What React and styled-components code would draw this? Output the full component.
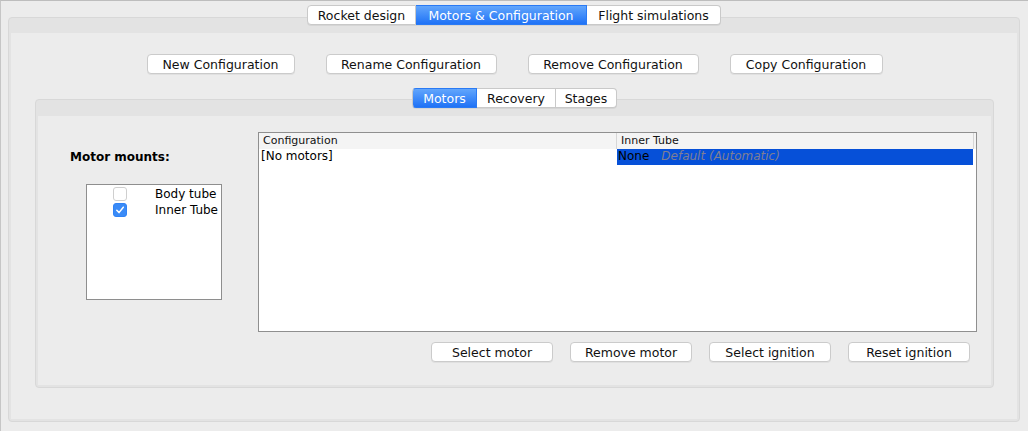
import React from "react";
import styled, { createGlobalStyle, css } from "styled-components";

const GlobalStyle = createGlobalStyle`
  html, body {
    margin: 0;
    padding: 0;
    background: #ececec;
  }
  body {
    font-family: "DejaVu Sans", "Liberation Sans", sans-serif;
    font-size: 12px;
    color: #000;
  }
`;

const Window = styled.div`
  width: 1028px;
  height: 431px;
  box-sizing: border-box;
  border-top: 1px solid #bdbdbd;
  border-left: 1px solid #c6c6c6;
  padding: 4px 8px 9px 7px;
  display: flex;
  flex-direction: column;
  background: #ececec;
`;

const TabStrip = styled.div`
  display: flex;
  justify-content: center;
  position: relative;
  z-index: 2;
  height: 20px;
`;

const Tab = styled.div`
  width: ${(p) => p.$w}px;
  height: 20px;
  box-sizing: border-box;
  display: flex;
  align-items: center;
  justify-content: center;
  background: #fff;
  border: 1px solid #c9c9c9;
  border-left: none;
  box-shadow: 0 1px 0 rgba(0, 0, 0, 0.06);
  font-size: 12.5px;
  color: #111;
  white-space: nowrap;
  &:first-child {
    border-left: 1px solid #c9c9c9;
    border-radius: 4px 0 0 4px;
  }
  &:last-child {
    border-radius: 0 4px 4px 0;
  }
  ${(p) =>
    p.$active &&
    css`
      background: linear-gradient(#62a6fc, #1f72f6);
      border-color: #2a7af4;
      color: #fff;
    `}
`;

const Panel = styled.div`
  flex: 1;
  display: flex;
  flex-direction: column;
  margin-top: ${(p) => p.$overlap}px;
  border: 1px solid #d8d8d8;
  border-radius: 4px;
  background: #e3e3e3;
  padding: ${(p) => p.$head}px 2px 2px 2px;
`;

const PanelBody = styled.div`
  flex: 1;
  display: flex;
  flex-direction: column;
  background: #ececec;
`;

const OuterBody = styled(PanelBody)`
  padding: 21px 23px 31px 24px;
`;

const ButtonRow = styled.div`
  display: flex;
  justify-content: ${(p) => p.$justify || "center"};
  gap: ${(p) => p.$gap}px;
`;

const Button = styled.button`
  width: ${(p) => p.$w}px;
  height: 20px;
  box-sizing: border-box;
  padding: 0;
  background: #fff;
  border: 1px solid #cbcbcb;
  border-radius: 4px;
  box-shadow: 0 1px 0 rgba(0, 0, 0, 0.05);
  font-family: inherit;
  font-size: 12.5px;
  color: #111;
  white-space: nowrap;
`;

const InnerWrap = styled.div`
  flex: 1;
  display: flex;
  flex-direction: column;
  margin-top: 14px;
`;

const InnerBody = styled(PanelBody)`
  flex-direction: row;
  padding: 16px 14px 22px 0;
`;

const LeftColumn = styled.div`
  width: 220px;
  flex-shrink: 0;
  padding: 18px 0 0 32px;
  box-sizing: border-box;
`;

const MountsLabel = styled.div`
  font-weight: bold;
  font-size: 12px;
  line-height: 15px;
`;

const ListBox = styled.div`
  margin: 19px 0 0 16px;
  width: 136px;
  height: 116px;
  box-sizing: border-box;
  border: 1px solid #8e8e8e;
  background: #fff;
  padding-top: 1px;
`;

const CheckRow = styled.div`
  display: flex;
  align-items: center;
  height: 16px;
  padding-left: 26px;
  gap: 28px;
  font-size: 12px;
`;

const Box = styled.span`
  width: 14px;
  height: 14px;
  box-sizing: border-box;
  border-radius: 3px;
  display: flex;
  align-items: center;
  justify-content: center;
  background: ${(p) => (p.$checked ? "#3a8bf7" : "#fff")};
  border: 1px solid ${(p) => (p.$checked ? "#3083f5" : "#cfcfcf")};
`;

const RightColumn = styled.div`
  flex: 1;
  display: flex;
  flex-direction: column;
`;

const Table = styled.div`
  height: 200px;
  box-sizing: border-box;
  border: 1px solid #8f8f8f;
  background: #fff;
`;

const Row = styled.div`
  display: flex;
  height: ${(p) => p.$h}px;
  background: ${(p) => p.$bg || "transparent"};
`;

const HeadCell = styled.div`
  width: ${(p) => p.$w}px;
  box-sizing: border-box;
  padding-left: 4px;
  font-size: 11px;
  line-height: 16px;
  color: #111;
  border-right: 1px solid #d6d6d6;
`;

const Cell = styled.div`
  width: ${(p) => p.$w}px;
  box-sizing: border-box;
  padding-left: ${(p) => (p.$selected ? 1 : 2)}px;
  font-size: 12px;
  line-height: 15px;
  white-space: nowrap;
  background: ${(p) => (p.$selected ? "#0650d8" : "transparent")};
`;

const Hint = styled.span`
  font-style: italic;
  color: #7f7f93;
  margin-left: 12px;
`;

const BottomButtons = styled(ButtonRow)`
  margin-top: 10px;
  padding-right: 7px;
`;

function Check() {
  return (
    <svg width="10" height="10" viewBox="0 0 10 10">
      <polyline
        points="1.8,5.2 4,7.6 8.3,2.2"
        fill="none"
        stroke="#fff"
        strokeWidth="1.5"
        strokeLinecap="round"
        strokeLinejoin="round"
      />
    </svg>
  );
}

export default function App() {
  return (
    <>
      <GlobalStyle />
      <Window>
        <TabStrip>
          <Tab $w={109}>Rocket design</Tab>
          <Tab $w={171} $active>Motors &amp; Configuration</Tab>
          <Tab $w={134}>Flight simulations</Tab>
        </TabStrip>
        <Panel $overlap={-8} $head={15}>
          <OuterBody>
            <ButtonRow $gap={31}>
              <Button $w={148}>New Configuration</Button>
              <Button $w={171}>Rename Configuration</Button>
              <Button $w={171}>Remove Configuration</Button>
              <Button $w={153}>Copy Configuration</Button>
            </ButtonRow>
            <InnerWrap>
              <TabStrip>
                <Tab $w={65} $active>Motors</Tab>
                <Tab $w={79}>Recovery</Tab>
                <Tab $w={61}>Stages</Tab>
              </TabStrip>
              <Panel $overlap={-9} $head={16}>
                <InnerBody>
                  <LeftColumn>
                    <MountsLabel>Motor mounts:</MountsLabel>
                    <ListBox>
                      <CheckRow>
                        <Box />
                        <span>Body tube</span>
                      </CheckRow>
                      <CheckRow>
                        <Box $checked>
                          <Check />
                        </Box>
                        <span>Inner Tube</span>
                      </CheckRow>
                    </ListBox>
                  </LeftColumn>
                  <RightColumn>
                    <Table>
                      <Row $h={16} $bg="#f4f4f4">
                        <HeadCell $w={358}>Configuration</HeadCell>
                        <HeadCell $w={357}>Inner Tube</HeadCell>
                      </Row>
                      <Row $h={16}>
                        <Cell $w={358}>[No motors]</Cell>
                        <Cell $w={356} $selected>
                          None<Hint>Default (Automatic)</Hint>
                        </Cell>
                      </Row>
                    </Table>
                    <BottomButtons $gap={17} $justify="flex-end">
                      <Button $w={122}>Select motor</Button>
                      <Button $w={122}>Remove motor</Button>
                      <Button $w={122}>Select ignition</Button>
                      <Button $w={122}>Reset ignition</Button>
                    </BottomButtons>
                  </RightColumn>
                </InnerBody>
              </Panel>
            </InnerWrap>
          </OuterBody>
        </Panel>
      </Window>
    </>
  );
}
